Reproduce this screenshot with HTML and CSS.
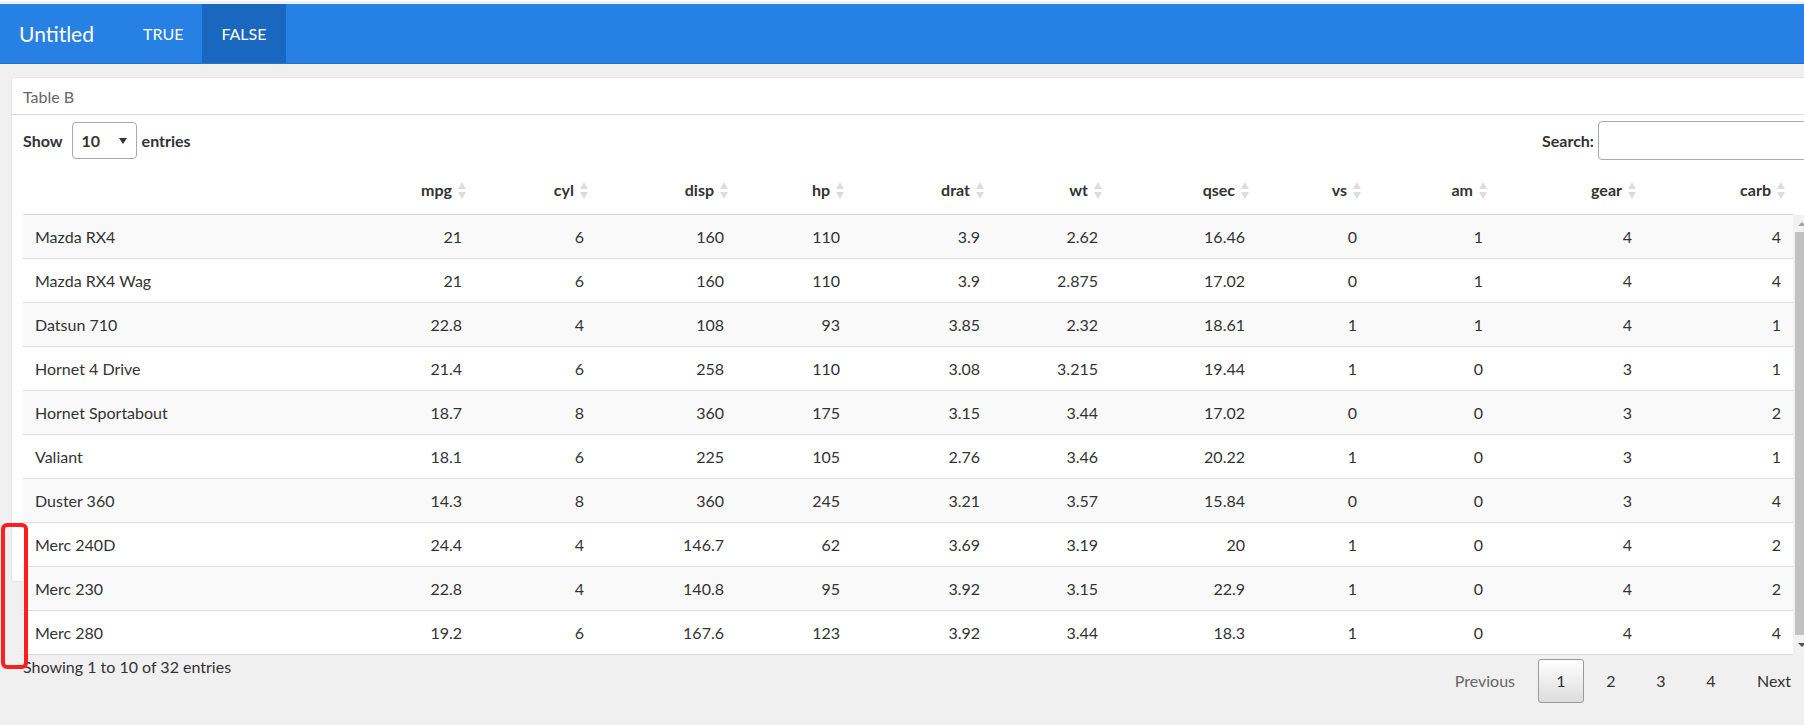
FILE: index.html
```html
<!DOCTYPE html>
<html>
<head>
<meta charset="utf-8">
<title>Untitled</title>
<link rel="stylesheet" href="styles.css">
</head>
<body>
<div class="topstrip"></div>
<nav class="navbar">
  <span class="brand">Untitled</span>
  <a class="tab">TRUE</a>
  <a class="tab active">FALSE</a>
</nav>
<main class="page">
  <section class="card">
    <div class="card-title">Table B</div>
    <div class="card-body">
      <div class="dt-controls">
        <label class="len">Show
          <span class="select">10
            <svg class="caret" width="8" height="6" viewBox="0 0 8 6"><path d="M0 0H8L4 6Z" fill="#333"/></svg>
          </span>
          entries</label>
        <label class="search">Search:<span class="input"></span></label>
      </div>

      <div class="scroll-head">
        <table class="dt">
          <colgroup>
            <col class="w-name"><col class="w-mpg"><col class="w-cyl"><col class="w-disp"><col class="w-hp"><col class="w-drat"><col class="w-wt"><col class="w-qsec"><col class="w-vs"><col class="w-am"><col class="w-gear"><col class="w-carb">
          </colgroup>
          <thead>
            <tr>
              <th class="blank"></th>
              <th>mpg<i class="sort"></i></th>
              <th>cyl<i class="sort"></i></th>
              <th>disp<i class="sort"></i></th>
              <th>hp<i class="sort"></i></th>
              <th>drat<i class="sort"></i></th>
              <th>wt<i class="sort"></i></th>
              <th>qsec<i class="sort"></i></th>
              <th>vs<i class="sort"></i></th>
              <th>am<i class="sort"></i></th>
              <th>gear<i class="sort"></i></th>
              <th>carb<i class="sort"></i></th>
            </tr>
          </thead>
        </table>
      </div>

      <div class="scroll-body">
        <table class="dt">
          <colgroup>
            <col class="w-name"><col class="w-mpg"><col class="w-cyl"><col class="w-disp"><col class="w-hp"><col class="w-drat"><col class="w-wt"><col class="w-qsec"><col class="w-vs"><col class="w-am"><col class="w-gear"><col class="w-carb">
          </colgroup>
          <tbody>
            <tr><td>Mazda RX4</td><td>21</td><td>6</td><td>160</td><td>110</td><td>3.9</td><td>2.62</td><td>16.46</td><td>0</td><td>1</td><td>4</td><td>4</td></tr>
            <tr><td>Mazda RX4 Wag</td><td>21</td><td>6</td><td>160</td><td>110</td><td>3.9</td><td>2.875</td><td>17.02</td><td>0</td><td>1</td><td>4</td><td>4</td></tr>
            <tr><td>Datsun 710</td><td>22.8</td><td>4</td><td>108</td><td>93</td><td>3.85</td><td>2.32</td><td>18.61</td><td>1</td><td>1</td><td>4</td><td>1</td></tr>
            <tr><td>Hornet 4 Drive</td><td>21.4</td><td>6</td><td>258</td><td>110</td><td>3.08</td><td>3.215</td><td>19.44</td><td>1</td><td>0</td><td>3</td><td>1</td></tr>
            <tr><td>Hornet Sportabout</td><td>18.7</td><td>8</td><td>360</td><td>175</td><td>3.15</td><td>3.44</td><td>17.02</td><td>0</td><td>0</td><td>3</td><td>2</td></tr>
            <tr><td>Valiant</td><td>18.1</td><td>6</td><td>225</td><td>105</td><td>2.76</td><td>3.46</td><td>20.22</td><td>1</td><td>0</td><td>3</td><td>1</td></tr>
            <tr><td>Duster 360</td><td>14.3</td><td>8</td><td>360</td><td>245</td><td>3.21</td><td>3.57</td><td>15.84</td><td>0</td><td>0</td><td>3</td><td>4</td></tr>
            <tr><td>Merc 240D</td><td>24.4</td><td>4</td><td>146.7</td><td>62</td><td>3.69</td><td>3.19</td><td>20</td><td>1</td><td>0</td><td>4</td><td>2</td></tr>
            <tr><td>Merc 230</td><td>22.8</td><td>4</td><td>140.8</td><td>95</td><td>3.92</td><td>3.15</td><td>22.9</td><td>1</td><td>0</td><td>4</td><td>2</td></tr>
            <tr><td>Merc 280</td><td>19.2</td><td>6</td><td>167.6</td><td>123</td><td>3.92</td><td>3.44</td><td>18.3</td><td>1</td><td>0</td><td>4</td><td>4</td></tr>
          </tbody>
        </table>
        <div class="vscroll">
          <span class="arrow up"></span>
          <span class="thumb"></span>
          <span class="arrow down"></span>
        </div>
      </div>

      <div class="dt-footer">
        <div class="info">Showing 1 to 10 of 32 entries</div>
        <div class="pager">
          <span class="pbtn disabled">Previous</span>
          <span class="pbtn num current">1</span>
          <span class="pbtn num">2</span>
          <span class="pbtn num">3</span>
          <span class="pbtn num">4</span>
          <span class="pbtn">Next</span>
        </div>
      </div>
    </div>
  </section>
</main>
<div class="annot"></div>
</body>
</html>
```

FILE: styles.css
```css
html, body {
  margin: 0;
  padding: 0;
  overflow: hidden;
  height: 725px;
}
body {
  background: #f0f0f0;
  font-family: Lato, "Open Sans", sans-serif;
  font-size: 16px;
  color: #333;
  position: relative;
}

.topstrip {
  height: 4px;
  background: #eef0f3;
  border-top: 1px solid #fff;
  box-sizing: border-box;
}

.navbar {
  height: 60px;
  background: #2780e3;
  border-bottom: 1px solid #1f72cf;
  box-sizing: border-box;
  display: flex;
  align-items: stretch;
  color: #fff;
}
.brand {
  display: flex;
  align-items: center;
  padding: 0 30px 0 19px;
  font-size: 21px;
}
.tab {
  display: flex;
  align-items: center;
  padding: 0 19px;
  font-size: 16px;
  color: #fff;
}
.tab.active {
  background: #1967be;
}

.page {
  padding: 13px 0 0 11px;
}
.card {
  width: 1811px;
  height: 505px;
  box-sizing: border-box;
  background: #fff;
  border: 1px solid #e3e3e3;
  border-radius: 3px;
}
.card-title {
  height: 36px;
  border-bottom: 1px solid #dcdcdc;
  padding-left: 11px;
  display: flex;
  align-items: center;
  color: #666;
  font-size: 16px;
}
.card-body {
  padding: 0 11px;
}

.dt-controls {
  height: 46px;
  display: flex;
  justify-content: space-between;
  align-items: flex-start;
  padding-top: 6px;
  box-sizing: border-box;
  font-weight: bold;
}
.len, .search {
  display: flex;
  align-items: center;
  height: 39px;
}
.select {
  display: inline-flex;
  align-items: center;
  justify-content: space-between;
  width: 65px;
  height: 37px;
  box-sizing: border-box;
  margin: 0 5px 0 9px;
  padding: 0 9px 0 9px;
  border: 1px solid #aaa;
  border-radius: 4px;
  font-weight: bold;
}
.caret {
  display: block;
}
.input {
  display: inline-block;
  width: 212px;
  height: 39px;
  box-sizing: border-box;
  margin-left: 4px;
  border: 1px solid #aaa;
  border-radius: 4px;
  background: #fff;
}

table.dt {
  width: 1770px;
  table-layout: fixed;
  border-collapse: separate;
  border-spacing: 0;
}
col.w-name { width: 357px; }
col.w-mpg { width: 94px; }
col.w-cyl { width: 122px; }
col.w-disp { width: 140px; }
col.w-hp { width: 116px; }
col.w-drat { width: 140px; }
col.w-wt { width: 118px; }
col.w-qsec { width: 147px; }
col.w-vs { width: 112px; }
col.w-am { width: 126px; }
col.w-gear { width: 149px; }
col.w-carb { width: 149px; }

.dt th {
  position: relative;
  height: 39px;
  padding: 0 22px 14px 12px;
  vertical-align: bottom;
  text-align: right;
  font-weight: bold;
  line-height: 21px;
  border-bottom: 1px solid #d6d6d6;
  white-space: nowrap;
}
.sort {
  position: absolute;
  right: 7px;
  bottom: 15px;
  width: 9px;
  height: 17px;
}
.sort::before, .sort::after {
  content: "";
  position: absolute;
  left: 0;
  border-left: 4.5px solid transparent;
  border-right: 4.5px solid transparent;
}
.sort::before {
  top: 0;
  border-bottom: 7px solid #dddddd;
}
.sort::after {
  bottom: 0;
  border-top: 7px solid #dddddd;
}

.scroll-body {
  display: flex;
  align-items: flex-start;
}
.dt td {
  height: 43px;
  padding: 0 12px;
  text-align: right;
  border-bottom: 1px solid #dcdcdc;
  white-space: nowrap;
  background: #fff;
}
.dt td:first-child {
  text-align: left;
}
.dt tbody tr:nth-child(odd) td {
  background: #f9f9f9;
}

.vscroll {
  width: 17px;
  height: 440px;
  flex: none;
  background: #f1f1f1;
  display: flex;
  flex-direction: column;
  align-items: center;
}
.thumb {
  width: 13px;
  flex: 1;
  background: #c1c1c1;
}
.arrow {
  height: 17px;
  width: 17px;
  display: flex;
  align-items: center;
  justify-content: center;
  flex: none;
}
.arrow::before {
  content: "";
  border-left: 4px solid transparent;
  border-right: 4px solid transparent;
}
.arrow.up::before {
  border-bottom: 4px solid #a3a3a3;
}
.arrow.down {
  height: 20px;
}
.arrow.down::before {
  border-top: 4px solid #505050;
}

.dt-footer {
  display: flex;
  justify-content: space-between;
  align-items: flex-start;
}
.info {
  line-height: 21px;
  padding-top: 1px;
}
.pager {
  display: flex;
  margin-top: 4px;
}
.pbtn {
  height: 44px;
  box-sizing: border-box;
  line-height: 42px;
  padding: 0 18px;
  margin-left: 4px;
  border: 1px solid transparent;
  border-radius: 3px;
  color: #333;
}
.pbtn.num {
  width: 46px;
  padding: 0;
  text-align: center;
}
.pbtn.disabled {
  color: #666;
}
.pbtn.current {
  border-color: #9a9a9a;
  background: linear-gradient(to bottom, #ffffff 0%, #dcdcdc 100%);
}

.annot {
  position: absolute;
  left: 1px;
  top: 523px;
  width: 27px;
  height: 146px;
  box-sizing: border-box;
  border: 4px solid #ff1e1e;
  border-radius: 6px;
}
```
